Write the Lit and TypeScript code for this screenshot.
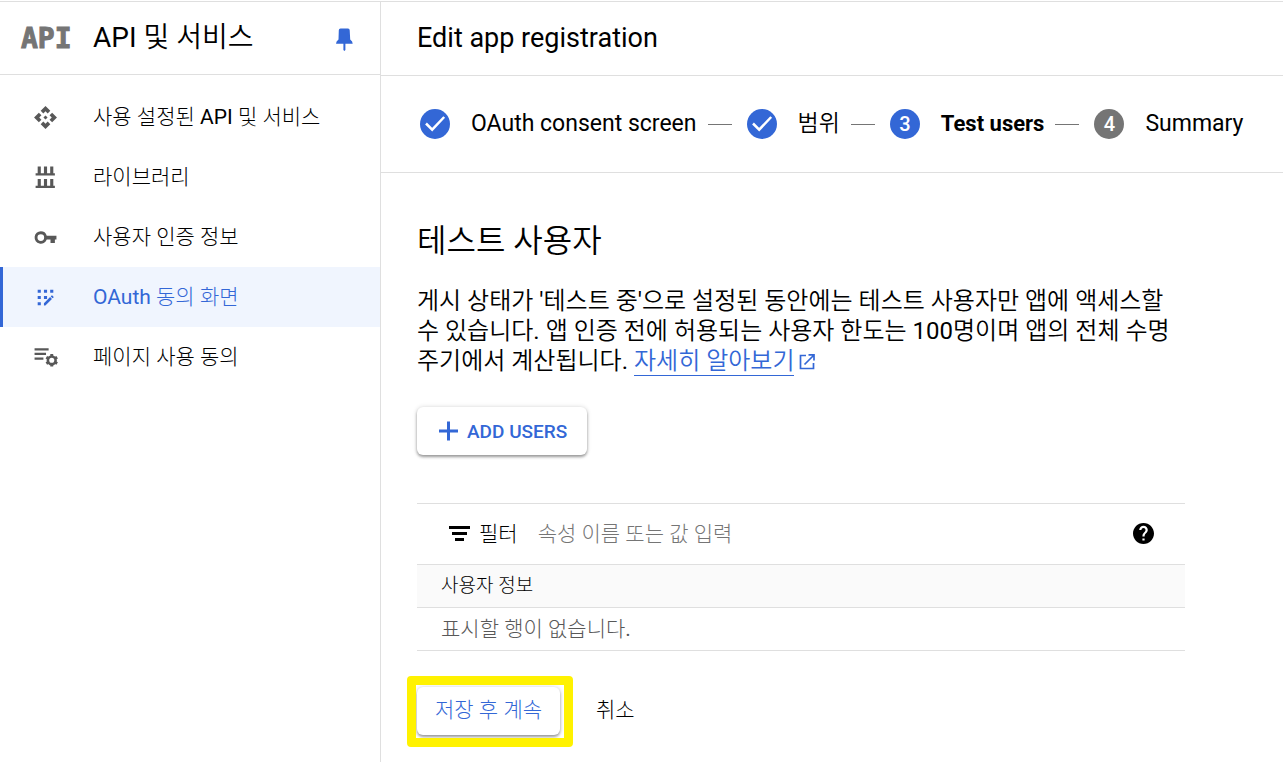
import { LitElement, html, css, svg } from "lit";
import { customElement, property } from "lit/decorators.js";
import { classMap } from "lit/directives/class-map.js";

const base = css`
  :host {
    display: block;
    box-sizing: border-box;
  }
  *,
  *::before,
  *::after {
    box-sizing: border-box;
  }
  h1,
  h2,
  p,
  ol,
  ul {
    margin: 0;
    padding: 0;
    font-weight: 400;
    list-style: none;
  }
  a {
    color: inherit;
    text-decoration: none;
  }
  button,
  input {
    font: inherit;
    color: inherit;
    border: 0;
    background: none;
    padding: 0;
  }
  svg {
    display: block;
    flex: none;
  }
  .fine {
    font-family: Roboto, "Noto Sans CJK KR Light", "Noto Sans CJK KR", sans-serif;
  }
`;

const navIcons = {
  api: svg`<path d="M14 12l-2 2-2-2 2-2 2 2zm-2-6l2.12 2.12 2.5-2.5L12 1 7.38 5.62l2.5 2.5L12 6zm-6 6l2.12-2.12-2.5-2.5L1 12l4.62 4.62 2.5-2.5L6 12zm12 0l-2.12 2.12 2.5 2.5L23 12l-4.62-4.62-2.5 2.5L18 12zm-6 6l-2.12-2.12-2.5 2.5L12 23l4.62-4.62-2.5-2.5L12 18z"/>`,
  library: svg`<path d="M4.500 1.500h3v6.500h3V1.500h3v6.500h3V1.500h3v6.500h1.500v2H2.500V8h2zM4.500 13.500h3v6.500h3v-6.500h3v6.500h3v-6.500h3v6.500h1.500v2H2.500v-2h2z"/>`,
  key: svg`<path fill-rule="evenodd" d="M7.500 6a6 6 0 0 1 5.700 4.200H22.500v3.800H21v3.200h-4.200V14h-3.600A6 6 0 1 1 7.500 6zm0 2.900a3.200 3.200 0 1 0 0 6.400 3.200 3.200 0 0 0 0-6.400z"/>`,
  consent: svg`<path d="M4.500 4.500h3v3h-3zM10.500 4.500h3v3h-3zM16.500 4.500h3v3h-3zM4.500 10.500h3v3h-3zM10.500 10.500h3v3h-3zM4.500 16.500h3v3h-3zM10.500 19.700v-2.200l5.900-5.900 1.800 1.800-6.300 6.300zM17 11l.9-.9q.3-.3.6 0l1.200 1.200q.3.3 0 .6l-.9.9z"/>`,
  agreements: svg`<path d="M1.500 3h13.500v2.200h-13.500zM1.500 7.500h11v2.200h-11zM1.500 12h8.500v2.200h-8.500z"/><circle cx="18" cy="14.700" r="3.700" fill="none" stroke="currentColor" stroke-width="2.500"/><path fill="none" stroke="currentColor" stroke-width="2.800" d="M18 8.700v2M18 18.700v2M12.800 11.700l1.700 1M21.500 16.700l1.700 1M12.800 17.700l1.700-1M21.500 12.700l1.700-1"/>`,
};

@customElement("side-nav")
export class SideNav extends LitElement {
  static styles = [
    base,
    css`
      :host {
        border-right: 1px solid #dfdfdf;
      }
      .head {
        display: flex;
        align-items: center;
        height: 73px;
        padding: 0 24px 0 21px;
        border-bottom: 1px solid #dfdfdf;
      }
      .logo {
        width: 72px;
        padding-top: 2px;
        font: 700 28px/34px "DejaVu Sans Mono", monospace;
        color: #757575;
        -webkit-text-stroke: 1px #757575;
      }
      h2 {
        flex: 1;
        font-size: 28px;
        line-height: 36px;
      }
      ul {
        padding-top: 12px;
      }
      .item {
        display: flex;
        align-items: center;
        gap: 35px;
        height: 60px;
        padding-left: 30px;
        border-left: 3px solid transparent;
        font-size: 21px;
        line-height: 30px;
      }
      .item svg {
        color: #585858;
        fill: currentColor;
      }
      .active,
      .active svg {
        color: #3367d6;
      }
      .active {
        background: #f0f5fe;
        border-left-color: #3367d6;
      }
    `,
  ];

  private items: { icon: keyof typeof navIcons; text: string; active?: boolean }[] = [
    { icon: "api", text: "사용 설정된 API 및 서비스" },
    { icon: "library", text: "라이브러리" },
    { icon: "key", text: "사용자 인증 정보" },
    { icon: "consent", text: "OAuth 동의 화면", active: true },
    { icon: "agreements", text: "페이지 사용 동의" },
  ];

  render() {
    return html`
      <div class="head">
        <span class="logo">API</span>
        <h2>API 및 서비스</h2>
        <button aria-label="고정">
          <svg width="24" height="28" viewBox="0 -4 24 28" fill="#3367d6">
            <path d="M8.500 .5h7.500q1.700 0 1.700 1.700l.5 9.300q2.500 1.800 2.500 4.200H4q0-2.400 2.500-4.200l.3-9.300Q6.800.5 8.500 .5zM11.400 15.500h2V22l-1 1-1-1z" />
          </svg>
        </button>
      </div>
      <nav class="fine">
        <ul>
          ${this.items.map(
            (i) => html`<li>
              <a href="#" class=${classMap({ item: true, active: !!i.active })}>
                <svg width="25" height="25" viewBox="0 0 24 24">${navIcons[i.icon]}</svg>
                <span>${i.text}</span>
              </a>
            </li>`
          )}
        </ul>
      </nav>
    `;
  }
}

@customElement("step-bar")
export class StepBar extends LitElement {
  static styles = [
    base,
    css`
      :host {
        border-bottom: 1px solid #dfdfdf;
      }
      ol {
        display: flex;
        align-items: center;
        height: 96px;
        padding-left: 39px;
        font-size: 23px;
        line-height: 30px;
      }
      li {
        display: flex;
        align-items: center;
        white-space: nowrap;
      }
      li + li::before {
        content: "";
        width: 24px;
        height: 1px;
        margin: 0 15px 0 11px;
        background: #757575;
      }
      .dot {
        display: grid;
        place-items: center;
        width: 30px;
        height: 30px;
        margin-right: 21px;
        border-radius: 50%;
        background: #3367d6;
        color: #fff;
        font-size: 20px;
        font-weight: 500;
      }
      .pending {
        background: #757575;
      }
      .current {
        font-size: 22px;
        font-weight: 700;
      }
    `,
  ];

  @property({ type: Number }) current = 3;
  private steps = ["OAuth consent screen", "범위", "Test users", "Summary"];

  render() {
    return html`<ol>
      ${this.steps.map((s, i) => {
        const n = i + 1;
        return html`<li>
          <span class=${classMap({ dot: true, pending: n > this.current })}>
            ${n < this.current
              ? html`<svg width="30" height="30" viewBox="0 0 30 30" fill="none" stroke="#fff" stroke-width="2.500">
                  <path d="M6 14.500l6.200 6.200L24.200 8" />
                </svg>`
              : n}
          </span>
          <span class=${classMap({ current: n === this.current })}>${s}</span>
        </li>`;
      })}
    </ol>`;
  }
}

@customElement("test-users")
export class TestUsers extends LitElement {
  static styles = [
    base,
    css`
      :host {
        max-width: 840px;
        padding: 46px 36px 24px;
      }
      h2 {
        font-size: 32px;
        line-height: 44px;
        margin-bottom: 23px;
      }
      p {
        font-size: 24px;
        line-height: 30px;
      }
      .link {
        color: #3367d6;
      }
      .link span {
        border-bottom: 1px solid #3367d6;
      }
      .link svg {
        display: inline-block;
        margin-left: 4px;
        vertical-align: -2px;
      }
      .raised {
        display: flex;
        align-items: center;
        height: 48px;
        border-radius: 6px;
        background: #fff;
        color: #3367d6;
        box-shadow: 0 2px 3px rgba(0, 0, 0, 0.36), 0 0 5px rgba(0, 0, 0, 0.14);
      }
      .add {
        gap: 6px;
        margin: 31px 0 48px;
        padding: 0 20px 0 18px;
        font-size: 19px;
        font-weight: 500;
      }
      .filter {
        display: flex;
        align-items: center;
        height: 61px;
        padding: 0 30px;
        border-top: 1px solid #dfdfdf;
        font-size: 21px;
        line-height: 30px;
      }
      .filter label {
        display: flex;
        align-items: center;
        gap: 8px;
        margin-right: 20px;
      }
      .filter input {
        flex: 1;
        min-width: 0;
        outline: 0;
      }
      .filter input::placeholder {
        color: #757575;
        opacity: 1;
      }
      table {
        width: 100%;
        border-collapse: collapse;
        line-height: 30px;
      }
      th,
      td {
        height: 43px;
        padding: 0 24px;
        border-top: 1px solid #dfdfdf;
        border-bottom: 1px solid #dfdfdf;
        text-align: left;
        font-weight: 400;
      }
      th {
        background: #fafafa;
        font-size: 19px;
      }
      td {
        color: #585858;
        font-size: 21px;
      }
      .actions {
        display: flex;
        align-items: center;
        gap: 36px;
        margin-top: 36px;
        font-size: 21px;
        line-height: 30px;
      }
      .actions button {
        padding-bottom: 2px;
      }
      .marked {
        position: relative;
      }
      .marked::after {
        content: "";
        position: absolute;
        inset: -11px -13px -12px -10px;
        border: 9px solid #fff200;
        border-radius: 4px;
        pointer-events: none;
      }
      .save {
        padding: 0 18px;
      }
    `,
  ];

  render() {
    return html`
      <h2>테스트 사용자</h2>
      <p>
        게시 상태가 '테스트 중'으로 설정된 동안에는 테스트 사용자만 앱에 액세스할 수 있습니다. 앱 인증 전에 허용되는 사용자 한도는 100명이며 앱의 전체 수명 주기에서 계산됩니다.
        <a class="link" href="#"><span>자세히 알아보기</span><svg width="18" height="18" viewBox="0 0 18 18" fill="none" stroke="#3367d6" stroke-width="1.700">
            <path d="M8 2.500H2.500v13h13V10M10.500 1.900H16v5.600M16 2L6.500 11.500" /></svg></a>
      </p>
      <button class="raised add">
        <svg width="26" height="26" viewBox="0 0 26 26" fill="none" stroke="currentColor" stroke-width="3">
          <path d="M13.500 3.500v19M4 13h19" />
        </svg>
        ADD USERS
      </button>
      <div class="filter fine">
        <label for="filter">
          <svg width="24" height="24" viewBox="0 0 24 24"><path d="M2 4h21v3H2zM5 10h15v3H5zM8 16h9v3H8z" /></svg>
          필터
        </label>
        <input id="filter" type="text" placeholder="속성 이름 또는 값 입력" />
        <button aria-label="도움말">
          <svg width="24" height="24" viewBox="-.5 .5 24 24">
            <path d="M12 1.500C6.200 1.500 1.500 6.200 1.500 12S6.200 22.500 12 22.500 22.500 17.800 22.500 12 17.800 1.500 12 1.500zm1.100 17.600H10.900V17h2.200zm2.200-8.200l-1 1c-.7.800-1.200 1.400-1.200 3h-2.200v-.5c0-1.200.5-2.200 1.200-3l1.300-1.300c.4-.4.6-.9.600-1.500 0-1.200-.9-2.100-2-2.100s-2.100.9-2.100 2.100H7.700a4.300 4.300 0 0 1 8.600 0c0 .9-.4 1.700-1 2.300z" />
          </svg>
        </button>
      </div>
      <table class="fine">
        <thead>
          <tr><th scope="col">사용자 정보</th></tr>
        </thead>
        <tbody>
          <tr><td>표시할 행이 없습니다.</td></tr>
        </tbody>
      </table>
      <div class="actions fine">
        <div class="marked"><button class="raised save">저장 후 계속</button></div>
        <button>취소</button>
      </div>
    `;
  }
}

@customElement("app-root")
export class AppRoot extends LitElement {
  static styles = [
    base,
    css`
      :host {
        display: grid;
        grid-template-columns: 381px minmax(0, 1fr);
        min-height: 100vh;
        padding-top: 1px;
        background: linear-gradient(#dfdfdf, #dfdfdf) 0 1px / 100% 1px no-repeat #fff;
        color: #000;
        font-family: Roboto, "Noto Sans CJK KR DemiLight", "Noto Sans CJK KR", sans-serif;
      }
      side-nav,
      main {
        margin-top: 1px;
      }
      h1 {
        height: 74px;
        padding-left: 36px;
        border-bottom: 1px solid #dfdfdf;
        font-size: 27px;
        line-height: 72px;
      }
    `,
  ];

  render() {
    return html`
      <side-nav></side-nav>
      <main>
        <h1>Edit app registration</h1>
        <step-bar></step-bar>
        <test-users></test-users>
      </main>
    `;
  }
}
